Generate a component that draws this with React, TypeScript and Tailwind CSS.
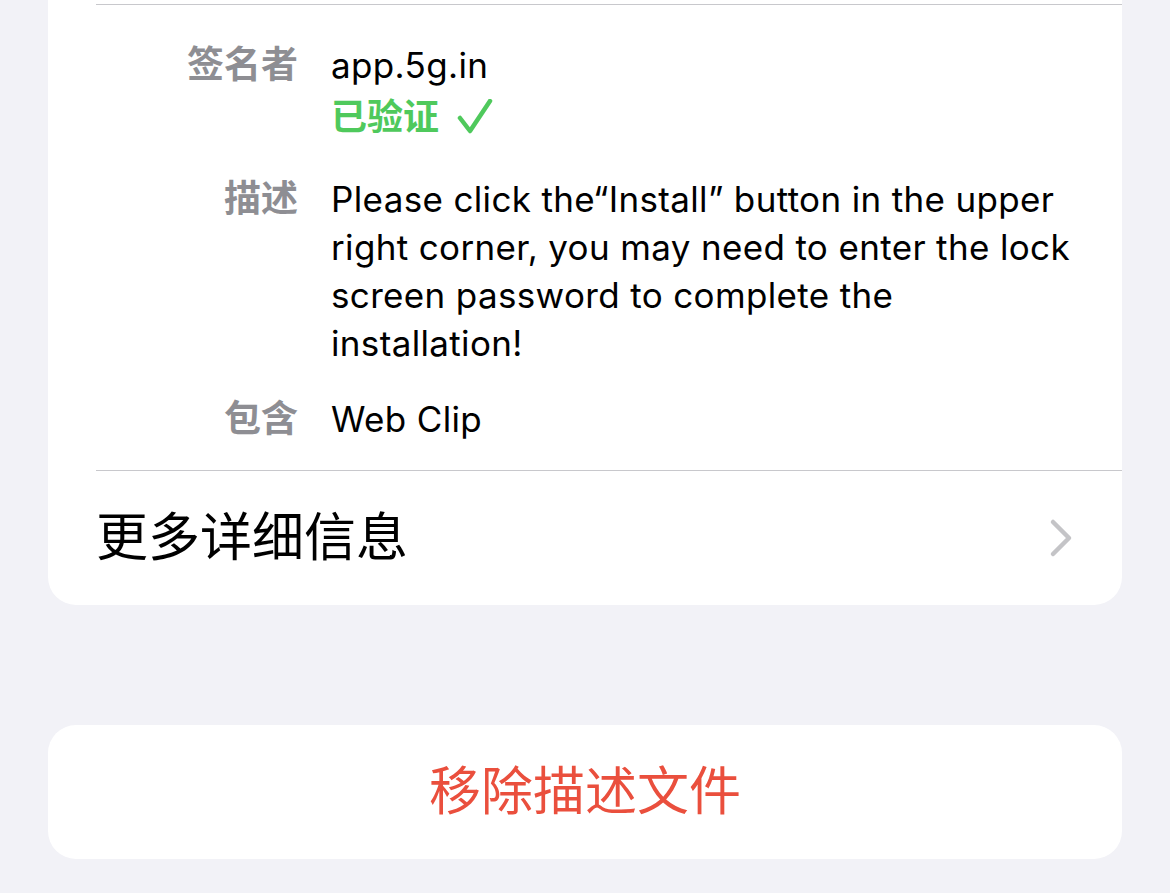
import { ReactNode } from "react";

const font = {
  fontFamily: 'Inter, "Noto Sans CJK SC", "Liberation Sans", sans-serif',
};

const Row = ({ label, children, className = "" }: { label: string; children: ReactNode; className?: string }) => {
  return (
    <div className={`flex ${className}`}>
      <div className="w-[202px] shrink-0 text-right text-[37px] leading-[48px] font-semibold text-[#8e8e93]">
        {label}
      </div>
      <div className="ml-[33px] flex-1 pr-[44px] text-[35px] leading-[48px] tracking-[0.35px] text-black">{children}</div>
    </div>
  );
};

export default function App() {
  return (
    <div className="min-h-[893px] w-[1170px] bg-[#f2f2f7] px-[48px]" style={font}>
      <div className="rounded-b-[28px] bg-white pt-[4px]">
        <div className="ml-[48px] border-t border-[#c8c8cc]" />
        <div className="ml-[48px] pt-[36px] pb-[27px]">
          <Row label="签名者">
            <div>app.5g.in</div>
            <div className="mt-[4px] flex items-center gap-[18px] text-[36px] font-semibold leading-[48px] tracking-normal text-[#4fc95c]">
              <span>已验证</span>
              <svg width="36" height="36" viewBox="0 0 36 36" fill="none">
                <path d="M3 19 L13 32 L33 2" stroke="#4fc95c" strokeWidth="4.5" strokeLinecap="round" strokeLinejoin="round" />
              </svg>
            </div>
          </Row>
          <Row label="描述" className="mt-[34px]">
            Please click the“Install” button in the upper right corner, you may need to enter the lock screen password to complete the installation!
          </Row>
          <Row label="包含" className="mt-[28px]">
            Web Clip
          </Row>
        </div>
        <div className="ml-[48px] border-t border-[#c8c8cc]" />
        <div className="ml-[48px] flex h-[134px] items-center justify-between pr-[48px]">
          <span className="text-[52px] text-black">更多详细信息</span>
          <svg width="26" height="40" viewBox="0 0 26 40" fill="none">
            <path d="M5 4 L21 20 L5 36" stroke="#c4c4c7" strokeWidth="4.5" strokeLinecap="round" strokeLinejoin="round" />
          </svg>
        </div>
      </div>
      <div className="mt-[120px] flex h-[134px] items-center justify-center rounded-[28px] bg-white">
        <span className="text-[52px] text-[#ea4f3d]">移除描述文件</span>
      </div>
    </div>
  );
}
